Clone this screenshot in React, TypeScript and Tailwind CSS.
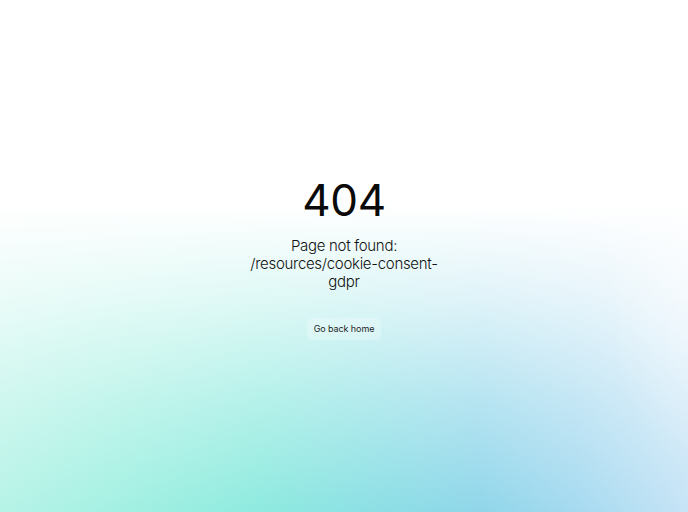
export default function App() {
  return (
    <div
      className="relative flex min-h-screen w-full flex-col items-center justify-center overflow-hidden bg-white pt-[6px] bg-[radial-gradient(ellipse_12%_35%_at_100%_55%,rgba(255,255,255,0.35)_0%,rgba(255,255,255,0)_100%),linear-gradient(to_bottom,#ffffff_0%,#ffffff_40%,rgba(255,255,255,0.72)_58%,rgba(255,255,255,0.35)_78%,rgba(255,255,255,0)_100%),linear-gradient(to_right,#b6f3e7_0%,#a2f0e2_18%,#8eeadf_38%,#8cdfe5_55%,#90d6ea_70%,#a6daf0_84%,#c6e4f6_100%)]"
      style={{ fontFamily: "Inter, 'Noto Sans', sans-serif" }}
    >
      <h1 className="text-[44px] font-normal leading-[44px] tracking-[-0.01em] text-[#0a0a0a]">404</h1>
      <p className="mt-[15px] max-w-[196px] text-center text-[15px] font-light leading-[18px] tracking-[-0.02em] text-[#111]">
        Page not found: /resources/cookie-consent-gdpr
      </p>
      <a
        href="#"
        className="mt-[27px] rounded-md bg-white/25 px-[7px] py-[5px] text-[9px] leading-[12px] tracking-[-0.01em] text-[#1f1f1f]"
      >
        Go back home
      </a>
    </div>
  );
}
